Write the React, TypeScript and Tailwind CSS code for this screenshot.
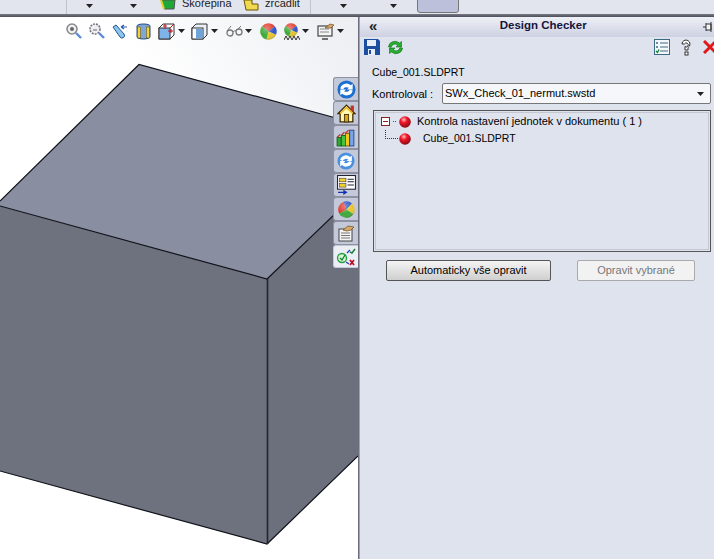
import React from 'react';

const Caret = ({ className = '' }: { className?: string }) => (
  <svg width="7" height="4" viewBox="0 0 7 4" className={className}>
    <path d="M0 0h7L3.500 4z" fill="#222" />
  </svg>
);

const Ball = ({ size = 15, turn = 0 }: { size?: number; turn?: number }) => (
  <svg width={size} height={size} viewBox="0 0 16 16">
    <defs>
      <radialGradient id="shade" cx=".4" cy=".3" r=".8">
        <stop offset="0" stopColor="#fff" stopOpacity=".35" />
        <stop offset=".6" stopColor="#fff" stopOpacity="0" />
        <stop offset="1" stopColor="#000" stopOpacity=".35" />
      </radialGradient>
    </defs>
    <g transform={`rotate(${turn} 8 8)`}>
      <path d="M8 8L2 3A7.800 7.800 0 0 1 14 3z" fill="#e03a2c" />
      <path d="M8 8L14 3A7.800 7.800 0 0 1 15 11z" fill="#2f55c8" />
      <path d="M8 8L15 11A7.800 7.800 0 0 1 6 15.500z" fill="#e8c52c" />
      <path d="M8 8L6 15.500A7.800 7.800 0 0 1 2 3z" fill="#3da838" />
    </g>
    <circle cx="8" cy="8" r="7.800" fill="url(#shade)" />
  </svg>
);

const RedDot = () => (
  <svg width="12" height="12" viewBox="0 0 12 12">
    <defs>
      <radialGradient id="rd" cx=".4" cy=".3" r=".7">
        <stop offset="0" stopColor="#ffc0b8" />
        <stop offset=".4" stopColor="#f0142a" />
        <stop offset="1" stopColor="#8a0a14" />
      </radialGradient>
    </defs>
    <circle cx="6" cy="6" r="5.800" fill="url(#rd)" />
  </svg>
);

const Refresh = ({ c1 = '#1c6fd0', size = 20 }: { c1?: string; size?: number }) => (
  <svg width={size} height={size} viewBox="0 0 20 20">
    <circle cx="10" cy="10" r="9.500" fill={c1} />
    <path d="M3.500 9a6.500 6 0 0 1 11-3.500l2-1.500v6h-6l2-1.800a3.800 3.200 0 0 0-6 1.800z" fill="#fff" />
    <path d="M16.500 11a6.500 6 0 0 1-11 3.500l-2 1.500v-6h6l-2 1.800a3.800 3.200 0 0 0 6-1.800z" fill="#fff" />
  </svg>
);

const HomeIcon = () => (
  <svg width="19" height="19" viewBox="0 0 18 18">
    <path d="M1 9L9 1 17 9h-2v8H3V9z" fill="#fff6b0" stroke="#3a2c00" strokeWidth="1.200" />
    <rect x="13" y="1.500" width="3" height="5.500" fill="#c83020" />
    <path d="M3 9L9 3.500 15 9" fill="none" stroke="#f0b020" strokeWidth="1.200" />
    <rect x="7" y="10" width="4" height="7" fill="#e0a020" stroke="#3a2c00" strokeWidth=".8" />
  </svg>
);

const ChartIcon = () => (
  <svg width="20" height="20" viewBox="0 0 19 19">
    <rect x="1" y="10" width="4" height="8" fill="#30a830" stroke="#0c5a10" strokeWidth=".8" />
    <rect x="5" y="8" width="4" height="10" fill="#48c040" stroke="#0c5a10" strokeWidth=".8" />
    <rect x="9" y="6" width="4" height="12" fill="#f0c820" stroke="#6a5200" strokeWidth=".8" />
    <rect x="13" y="3" width="4" height="15" fill="#7aa4e8" stroke="#1c3a80" strokeWidth=".8" />
    <path d="M1 10l3-3M5 8l3-3M9 6l3-3" stroke="#c03020" strokeWidth="1.200" />
  </svg>
);

const PropsIcon = () => (
  <svg width="19" height="20" viewBox="0 0 18 19">
    <rect x=".5" y=".5" width="17" height="13" fill="#fff" stroke="#223" strokeWidth="1" />
    <rect x="2.500" y="3" width="6" height="3.500" fill="#f0d030" stroke="#223" strokeWidth=".5" />
    <rect x="2.500" y="8" width="6" height="3.500" fill="#f0d030" stroke="#223" strokeWidth=".5" />
    <path d="M10 4h6M10 6.500h6M10 9.500h6" stroke="#223" strokeWidth="1" />
    <path d="M1 16h5V14l4 2.500L6 19v-2H1z" fill="#1030b0" />
  </svg>
);

const NoteIcon = ({ w = 18 }: { w?: number }) => (
  <svg width={w} height={w} viewBox="0 0 18 18">
    <rect x="2" y="5" width="13" height="12" fill="#f4f4f4" stroke="#444" strokeWidth="1" />
    <path d="M4 9h9M4 11.500h9M4 14h9" stroke="#777" strokeWidth="1" />
    <path d="M6 6l5-4 6 1-3 3-4 1z" fill="#d8a868" stroke="#6a4a20" strokeWidth=".7" />
  </svg>
);

const CheckTab = () => (
  <svg width="20" height="18" viewBox="0 0 20 18">
    <circle cx="6" cy="10" r="4.500" fill="#d8f4d0" stroke="#20a040" strokeWidth="1.300" />
    <path d="M4 10l2 2 3-5" fill="none" stroke="#108030" strokeWidth="1.300" />
    <path d="M11 5l3-3M10 14l3 2" stroke="#2040c0" strokeWidth="1.300" />
    <path d="M14 4l2 1 3-4" fill="none" stroke="#208040" strokeWidth="1.600" />
    <path d="M14 12l4 5M18 12l-4 5" stroke="#c01020" strokeWidth="1.800" />
  </svg>
);

const tabs = [
  <Refresh key="a" size={19} />,
  <HomeIcon key="b" />,
  <ChartIcon key="c" />,
  <Refresh key="d" size={18} c1="#4a90e0" />,
  <PropsIcon key="e" />,
  <Ball key="f" size={17} turn={-70} />,
  <NoteIcon key="g" />,
];

const Viewport = () => (
  <div className="relative w-[358px] h-full overflow-hidden bg-gradient-to-tr from-white from-65% to-[#eceef2]">
    <svg width="358" height="542" viewBox="0 17 358 542" className="absolute left-0 top-0">
      <polygon points="139,64.500 358,124 358,192 267,279 0,206 0,201" fill="#8a8ea1" />
      <polygon points="0,206 267,279 267,544 0,471" fill="#6e717e" />
      <polygon points="267,279 358,192 358,456 267,544" fill="#6c6f7c" />
      <g fill="none" stroke="#10121a" strokeWidth="1.200">
        <path d="M0 201L139 64.500 358 124" />
        <path d="M0 206L267 279 358 192" />
        <path d="M0 471L267 544 358 456" />
      </g>
      <path d="M267.500 279V544" stroke="#23252e" strokeWidth="1.600" />
    </svg>

    {/* floating view toolbar */}
    <div className="absolute left-[66px] top-[4px] flex items-center h-[20px]">
      <svg width="16" height="16" viewBox="0 0 16 16">
        <circle cx="6" cy="6" r="5" fill="#eef0f4" stroke="#8a8a8a" strokeWidth="1.600" />
        <circle cx="6" cy="6" r="2" fill="#666" />
        <path d="M10 10l5 5" stroke="#5a8ad8" strokeWidth="2.400" />
      </svg>
      <svg width="16" height="16" viewBox="0 0 16 16" className="ml-[7px]">
        <circle cx="6" cy="6" r="5" fill="#eef0f4" stroke="#777" strokeWidth="1.600" strokeDasharray="2 1" />
        <path d="M4 7h4" stroke="#666" strokeWidth="1" />
        <path d="M10 10l5 5" stroke="#5a8ad8" strokeWidth="2.400" />
      </svg>
      <svg width="16" height="16" viewBox="0 0 16 16" className="ml-[7px]">
        <path d="M1 4l3-2 8 9a2.500 2.500 0 0 1-4 3z" fill="#8fc4ee" stroke="#1c5a90" strokeWidth="1" />
        <path d="M9 4h6M9 4l3-2M9 4l3 2" stroke="#2a5ab0" strokeWidth="1.200" fill="none" />
      </svg>
      <svg width="15" height="17" viewBox="0 0 15 17" className="ml-[8px]">
        <path d="M1 3a6.500 2 0 0 1 13 0v11a6.500 2 0 0 1-13 0z" fill="#7ea6d8" stroke="#2a4a80" strokeWidth="1" />
        <rect x="1.500" y="4" width="3" height="11" fill="#f0d040" stroke="#5a4a00" strokeWidth=".5" />
        <rect x="10.500" y="4" width="3" height="11" fill="#f0d040" stroke="#5a4a00" strokeWidth=".5" />
      </svg>
      <svg width="17" height="17" viewBox="0 0 17 17" className="ml-[7px]">
        <path d="M1 5l4-4h11v11l-4 4H1z" fill="#fff" stroke="#333" strokeWidth="1" />
        <rect x="1" y="5" width="11" height="11" fill="#7eb4e8" stroke="#333" strokeWidth="1" />
        <path d="M12 5l4-4M7 1v5M5 3h4M10 8h5M13 6v4" stroke="#c01020" strokeWidth="1" />
      </svg>
      <Caret className="ml-[3px]" />
      <svg width="17" height="17" viewBox="0 0 17 17" className="ml-[6px]">
        <path d="M1 5l4-4h11v11l-4 4H1z" fill="#e8f0fa" stroke="#333" strokeWidth="1" />
        <rect x="1" y="5" width="11" height="11" fill="#fff" stroke="#333" strokeWidth="1" />
        <rect x="5" y="6" width="6.500" height="9.500" fill="#6ea4de" />
      </svg>
      <Caret className="ml-[3px]" />
      <svg width="17" height="14" viewBox="0 0 17 14" className="ml-[8px]">
        <circle cx="4" cy="9" r="3" fill="none" stroke="#777" strokeWidth="1.300" />
        <circle cx="13" cy="8" r="3" fill="none" stroke="#777" strokeWidth="1.300" />
        <path d="M7 8q2-2 3-1M1 7l4-5M11 6l4-4" fill="none" stroke="#777" strokeWidth="1" />
      </svg>
      <Caret className="ml-[2px]" />
      <div className="ml-[8px] flex"><Ball size={17} /></div>
      <div className="ml-[7px] relative w-[16px] h-[17px]">
        <Ball size={14} />
        <svg width="16" height="5" viewBox="0 0 16 5" className="absolute left-0 bottom-0">
          <path d="M0 5l2-4 2 4 2-4 2 4 2-4 2 4 2-4 2 4" fill="none" stroke="#333" strokeWidth="1" />
        </svg>
      </div>
      <Caret className="ml-[2px]" />
      <svg width="18" height="17" viewBox="0 0 18 17" className="ml-[8px]">
        <rect x="1" y="3" width="14" height="10" fill="#f4f4f4" stroke="#444" strokeWidth="1.200" />
        <path d="M3 6h9M3 9h9" stroke="#888" strokeWidth="1" />
        <path d="M5 16h6" stroke="#444" strokeWidth="1.500" />
        <path d="M8 5l5-4 4 1-3 3z" fill="#d8a868" stroke="#6a4a20" strokeWidth=".7" />
      </svg>
      <Caret className="ml-[2px]" />
    </div>

    {/* side tabs */}
    <div className="absolute right-0 top-[60px] flex flex-col w-[25px]">
      {tabs.map((icon, i) => (
        <div
          key={i}
          className="h-[24px] flex items-center justify-center bg-[#c4c9da] border border-r-0 border-[#8d91a2] rounded-tl-[3px] rounded-bl-[3px]"
        >
          {icon}
        </div>
      ))}
      <div className="h-[23px] flex items-center justify-center bg-[#eceef5] border border-r-0 border-[#c4c8d6] rounded-tl-[3px] rounded-bl-[3px]">
        <CheckTab />
      </div>
    </div>
  </div>
);

const Panel = () => (
  <div className="flex-1 h-full flex flex-col bg-[#dfe3ed] text-[11px] text-black overflow-hidden">
    <div className="h-[20px] flex items-center justify-between bg-gradient-to-b from-[#eef0f6] to-[#cdd2e2] px-[9px]">
      <span className="text-[15px] font-bold leading-none text-[#222] -mt-[3px]">«</span>
      <span className="text-[11.500px] font-bold text-[#14143c] ml-[6px] -mt-[2px]">Design Checker</span>
      <svg width="11" height="12" viewBox="0 0 11 12" className="-mr-[9px]">
        <path d="M0 6h3M3 2v8M3 3h5v6H3M8 1v10" stroke="#333" fill="#f4f4f4" strokeWidth="1" />
      </svg>
    </div>

    <div className="h-[20px] flex items-center pl-[4px] -mr-[3px]">
      <svg width="16" height="16" viewBox="0 0 16 16">
        <path d="M0 0h14l2 2v14H0z" fill="#1c4fa0" />
        <rect x="3" y="1" width="9" height="6" fill="#e8eef8" />
        <rect x="4" y="10" width="7" height="6" fill="#e8eef8" />
        <rect x="5" y="11" width="2" height="4" fill="#1c4fa0" />
      </svg>
      <svg width="17" height="17" viewBox="0 0 17 17" className="ml-[7px]">
        <path d="M1.500 8a6.500 6 0 0 1 11-4l2-1.500V8h-5.500l1.700-1.800a3.800 3.500 0 0 0-6.500 2z" fill="#28b030" stroke="#0c6a18" strokeWidth=".6" />
        <path d="M15.500 9a6.500 6 0 0 1-11 4l-2 1.500V9H8l-1.700 1.800a3.800 3.500 0 0 0 6.500-2z" fill="#28b030" stroke="#0c6a18" strokeWidth=".6" />
      </svg>
      <div className="flex-1" />
      <svg width="16" height="16" viewBox="0 0 16 16">
        <rect x=".5" y=".5" width="15" height="15" fill="#f4f8fc" stroke="#3a6a80" />
        <path d="M6 4h8M6 8h8M6 12h8" stroke="#3a6a80" strokeWidth="1" />
        <rect x="2" y="3" width="2" height="2" fill="#6a8aa0" />
        <rect x="2" y="7" width="2" height="2" fill="#6a8aa0" />
        <path d="M2 12l1.500 1.500L5 10.500" fill="none" stroke="#108030" strokeWidth="1.300" />
      </svg>
      <svg width="10" height="17" viewBox="0 0 10 17" className="ml-[11px]">
        <path d="M1 5a4 4 0 1 1 6 3.500V11H4V7.500A2 2 0 1 0 3.500 5z" fill="#fff" stroke="#333" strokeWidth="1" />
        <rect x="4" y="13" width="3" height="3" fill="#fff" stroke="#333" strokeWidth="1" />
      </svg>
      <svg width="14" height="14" viewBox="0 0 14 14" className="ml-[12px]">
        <path d="M1 1l12 12M13 1L1 13" stroke="#e01818" strokeWidth="3" />
      </svg>
    </div>

    <div className="h-[26px] flex items-center pl-[12px] pt-[5px] text-[10.500px]">Cube_001.SLDPRT</div>

    <div className="h-[21px] flex items-center pl-[12px] pr-[3px]">
      <span className="w-[70px] pt-[2px] whitespace-nowrap">Kontroloval :</span>
      <div className="flex-1 h-[21px] flex items-center justify-between bg-[#f6f7fa] border border-[#777] rounded-[2px] pl-[2px] pr-[5px]">
        <span>SWx_Check_01_nermut.swstd</span>
        <Caret className="mr-[1px]" />
      </div>
    </div>

    <div className="mt-[6px] ml-[13px] mr-[3px] h-[142px] border border-[#555] p-[1px]">
      <div className="h-full border border-[#c4c7d0] pl-[5px]">
        <div className="flex items-center h-[17px]">
          <span className="w-[9px] h-[9px] flex items-center justify-center border border-[#8a2020] bg-white">
            <span className="w-[5px] h-[1px] bg-[#8a2020]" />
          </span>
          <span className="w-[3px] border-t border-dotted border-[#555] mx-[3px]" />
          <RedDot />
          <span className="ml-[6px] whitespace-nowrap">Kontrola nastavení jednotek v dokumentu ( 1 )</span>
        </div>
        <div className="flex items-center h-[17px]">
          <span className="ml-[4px] w-[13px] h-[9px] -mt-[9px] border-l border-b border-dotted border-[#333]" />
          <span className="ml-[1px]"><RedDot /></span>
          <span className="ml-[12px] text-[10.500px]">Cube_001.SLDPRT</span>
        </div>
      </div>
    </div>

    <div className="mt-[8px] flex pl-[26px]">
      <button className="w-[165px] h-[21px] rounded-[2px] border border-[#555] bg-gradient-to-b from-[#f4f4f4] to-[#cfcfcf]">
        Automaticky vše opravit
      </button>
      <button className="ml-[26px] w-[118px] h-[21px] rounded-[2px] border border-[#aaa] bg-[#f2f2f2] text-[#777]">
        Opravit vybrané
      </button>
    </div>
  </div>
);

export default function App() {
  return (
    <div className='w-[714px] h-[559px] flex flex-col overflow-hidden bg-white font-["Liberation_Sans",sans-serif]'>
      <div className="h-[14px] shrink-0 relative bg-[#e2e5ed] overflow-hidden text-[11px] text-[#222]">
        <div className="absolute left-[66px] top-0 h-full border-l border-[#c0c4d0]" />
        <Caret className="absolute left-[86px] top-[4px]" />
        <Caret className="absolute left-[130px] top-[4px]" />
        <svg width="16" height="12" viewBox="0 0 16 12" className="absolute left-[160px] top-0">
          <path d="M1 0h14l-1 9H4z" fill="#1ea838" stroke="#555" strokeWidth="1" />
          <path d="M1 0l3 9" stroke="#e8d020" strokeWidth="2" />
        </svg>
        <span className="absolute left-[182px] -top-[5px] whitespace-nowrap">Skořepina</span>
        <svg width="16" height="12" viewBox="0 0 16 12" className="absolute left-[243px] top-0">
          <path d="M1 0h8v4h6v6H3z" fill="#f0d850" stroke="#6a5200" strokeWidth="1" />
        </svg>
        <span className="absolute left-[265px] -top-[5px] whitespace-nowrap">zrcadlit</span>
        <div className="absolute left-[310px] top-0 h-full border-l border-[#c0c4d0]" />
        <Caret className="absolute left-[340px] top-[4px]" />
        <Caret className="absolute left-[390px] top-[4px]" />
        <div className="absolute left-[417px] -top-[3px] w-[42px] h-[16px] bg-[#bcc0da] border border-[#777] rounded-[3px]" />
      </div>
      <div className="h-[3px] shrink-0 bg-gradient-to-b from-[#777b86] to-[#4e505a]" />
      <div className="flex-1 flex min-h-0">
        <Viewport />
        <div className="w-[2px] bg-gradient-to-r from-[#555864] to-[#b8bcc8]" />
        <Panel />
      </div>
    </div>
  );
}
